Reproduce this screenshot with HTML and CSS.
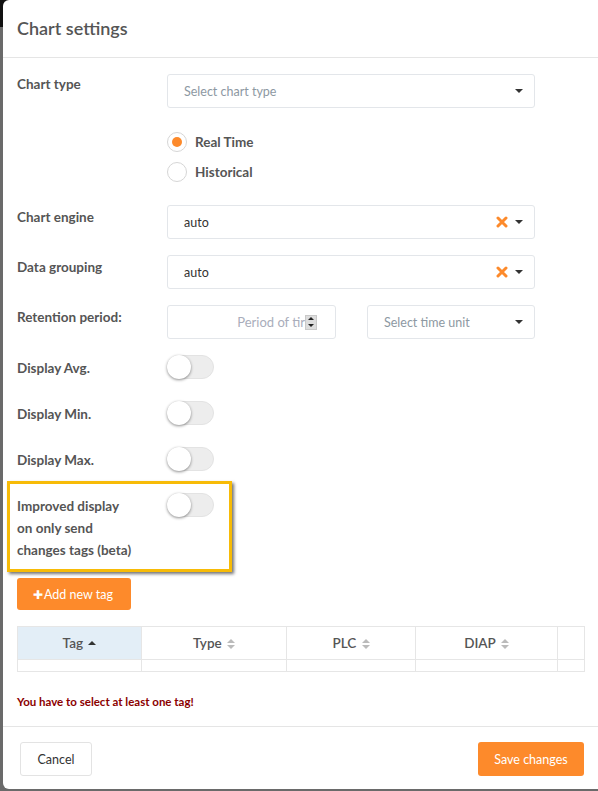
FILE: index.html
```html
<!DOCTYPE html>
<html>
<head>
<meta charset="utf-8">
<link rel="stylesheet" href="styles.css">
</head>
<body>
<div class="modal">
  <div class="modal-header">Chart settings</div>
  <div class="modal-body">
    <div class="row">
      <div class="label first">Chart type</div>
      <div class="field">
        <div class="select"><span class="placeholder">Select chart type</span><span class="caret"></span></div>
      </div>
    </div>
    <div class="radios">
      <div class="radio"><span class="circle checked"></span><span>Real Time</span></div>
      <div class="radio"><span class="circle"></span><span>Historical</span></div>
    </div>
    <div class="row">
      <div class="label">Chart engine</div>
      <div class="field">
        <div class="select"><span class="value">auto</span><svg class="clear" width="12" height="12" viewBox="0 0 12 12"><path d="M2 2 L10 10 M10 2 L2 10" stroke="#fd8a2b" stroke-width="3" stroke-linecap="round"/></svg><span class="caret"></span></div>
      </div>
    </div>
    <div class="row">
      <div class="label">Data grouping</div>
      <div class="field">
        <div class="select"><span class="value">auto</span><svg class="clear" width="12" height="12" viewBox="0 0 12 12"><path d="M2 2 L10 10 M10 2 L2 10" stroke="#fd8a2b" stroke-width="3" stroke-linecap="round"/></svg><span class="caret"></span></div>
      </div>
    </div>
    <div class="row">
      <div class="label">Retention period:</div>
      <div class="field split">
        <div class="numinput"><span class="numtext">Period of tir</span><span class="spinner"><span class="up"></span><span class="down"></span></span></div>
        <div class="select unit"><span class="placeholder">Select time unit</span><span class="caret"></span></div>
      </div>
    </div>
    <div class="trow">
      <div class="label">Display Avg.</div>
      <div class="toggle"><span class="knob"></span></div>
    </div>
    <div class="trow">
      <div class="label">Display Min.</div>
      <div class="toggle"><span class="knob"></span></div>
    </div>
    <div class="trow">
      <div class="label">Display Max.</div>
      <div class="toggle"><span class="knob"></span></div>
    </div>
    <div class="highlight">
      <div class="trow tall">
        <div class="label multi">Improved display<br>on only send<br>changes tags (beta)</div>
        <div class="toggle"><span class="knob"></span></div>
      </div>
    </div>
    <button class="btn-add"><span class="plus">&#10010;</span>Add new tag</button>
    <table class="tags">
      <thead>
        <tr>
          <th class="c1 sorted">Tag <span class="sort-up"></span></th>
          <th class="c2">Type <span class="sort"></span></th>
          <th class="c3">PLC <span class="sort"></span></th>
          <th class="c4">DIAP <span class="sort"></span></th>
          <th class="c5"></th>
        </tr>
      </thead>
      <tbody>
        <tr><td></td><td></td><td></td><td></td><td></td></tr>
      </tbody>
    </table>
    <div class="error">You have to select at least one tag!</div>
  </div>
  <div class="modal-footer">
    <button class="btn-cancel">Cancel</button>
    <button class="btn-save">Save changes</button>
  </div>
</div>
</body>
</html>
```

FILE: styles.css
```css
html, body {
  margin: 0;
  padding: 0;
  height: 100%;
}
body {
  background: linear-gradient(#111 0, #111 27px, #6a6a6a 27px);
  font-family: Lato, "Liberation Sans", sans-serif;
  color: #555;
  overflow: hidden;
}
.modal {
  margin-left: 3px;
  width: 620px;
  height: 789px;
  background: #fff;
  border-radius: 6px;
  box-sizing: border-box;
}
.modal-header {
  height: 58px;
  box-sizing: border-box;
  border-bottom: 1px solid #e5e5e5;
  padding: 17px 0 0 14px;
  font-size: 18px;
  font-weight: 600;
  color: #555;
}
.modal-body {
  padding: 16px 0 0 14px;
  width: 585px;
  box-sizing: border-box;
  height: 668px;
}
.row {
  display: flex;
  margin-bottom: 16px;
}
.label {
  width: 150px;
  font-size: 13.5px;
  font-weight: 700;
  color: #555;
  padding-top: 4px;
  flex-shrink: 0;
}
.label.first {
  padding-top: 2px;
}
.field {
  width: 368px;
}
.field.split {
  display: flex;
  gap: 31px;
}
.field.split .numinput {
  width: 169px;
}
.field.split .unit {
  width: 168px;
}
.select, .numinput {
  height: 34px;
  box-sizing: border-box;
  border: 1px solid #e3e6ea;
  border-radius: 3px;
  display: flex;
  align-items: center;
  padding: 0 11px 0 16px;
  font-size: 12.5px;
}
.placeholder {
  color: #8d98a2;
  flex: 1;
}
.value {
  color: #333;
  flex: 1;
}
.clear {
  margin-right: 7px;
}
.caret {
  width: 0;
  height: 0;
  border-left: 4px solid transparent;
  border-right: 4px solid transparent;
  border-top: 4px solid #333;
}
.numinput {
  padding: 0 18px 0 0;
  justify-content: flex-end;
}
.numtext {
  color: #a9adbb;
  font-size: 13px;
}
.spinner {
  width: 12px;
  height: 15px;
  background: #ddd;
  border: 1px solid #c9c9c9;
  box-sizing: border-box;
  display: flex;
  flex-direction: column;
  align-items: center;
  justify-content: space-around;
}
.up {
  width: 0; height: 0;
  border-left: 3px solid transparent;
  border-right: 3px solid transparent;
  border-bottom: 3px solid #222;
}
.down {
  width: 0; height: 0;
  border-left: 3px solid transparent;
  border-right: 3px solid transparent;
  border-top: 3px solid #222;
}
.radios {
  margin: 24px 0 23px 150px;
  display: flex;
  flex-direction: column;
  gap: 10px;
}
.radio {
  display: flex;
  align-items: center;
  gap: 8px;
  font-size: 13.5px;
  font-weight: 700;
  color: #555;
  height: 20px;
}
.circle {
  width: 20px;
  height: 20px;
  box-sizing: border-box;
  border: 1px solid #d6d6d6;
  border-radius: 50%;
  display: flex;
  align-items: center;
  justify-content: center;
}
.circle.checked::after {
  content: "";
  width: 10px;
  height: 10px;
  border-radius: 50%;
  background: #fd8a2b;
}
.trow {
  display: flex;
  height: 24px;
  margin-bottom: 22px;
}
.trow .label {
  padding-top: 5px;
}
.toggle {
  width: 47px;
  height: 24px;
  box-sizing: border-box;
  border: 1px solid #e3e3e3;
  background: #ededed;
  border-radius: 12px;
  position: relative;
}
.knob {
  position: absolute;
  left: -1px;
  top: -1px;
  width: 24px;
  height: 24px;
  border-radius: 50%;
  background: #fff;
  box-shadow: 0 1px 3px rgba(0,0,0,0.45);
}
.highlight {
  margin: -12px 0 0 -10px;
  width: 225px;
  height: 91px;
  box-sizing: border-box;
  border: 3px solid #f7bb07;
  box-shadow: 2px 2px 3px rgba(0,0,0,0.55);
  padding: 9px 0 0 7px;
}
.trow.tall {
  height: auto;
  margin: 0;
}
.trow .label.multi {
  line-height: 22px;
  padding-top: 2px;
}
.btn-add {
  margin-top: 6px;
  display: flex;
  align-items: center;
  height: 32px;
  width: 114px;
  border: none;
  border-radius: 3px;
  background: #fd8a2b;
  color: #fff;
  font-family: inherit;
  font-size: 12.5px;
  padding: 0 0 0 16px;
}
.plus {
  font-size: 12px;
  margin-right: 1px;
}
.tags {
  margin-top: 16px;
  border-collapse: collapse;
  width: 568px;
  font-size: 13.5px;
}
.tags th {
  height: 33px;
  box-sizing: border-box;
  border: 1px solid #e6e6e6;
  font-weight: 600;
  color: #555;
  padding: 0;
}
.tags td {
  height: 11px;
  border: 1px solid #e6e6e6;
  padding: 0;
}
.tags .c1 { width: 124px; background: #e3eef7; }
.tags .c2 { width: 145px; }
.tags .c3 { width: 129px; }
.tags .c4 { width: 142px; }
.tags .c5 { width: 27px; }
.sort-up {
  display: inline-block;
  vertical-align: middle;
  margin-left: 2px;
  width: 0; height: 0;
  border-left: 4px solid transparent;
  border-right: 4px solid transparent;
  border-bottom: 4px solid #333;
  margin-top: -3px;
}
.sort {
  display: inline-block;
  vertical-align: middle;
  margin-left: 2px;
  width: 8px;
  height: 10px;
  margin-top: -2px;
  position: relative;
}
.sort::before, .sort::after {
  content: "";
  position: absolute;
  left: 0;
  width: 0; height: 0;
  border-left: 4px solid transparent;
  border-right: 4px solid transparent;
}
.sort::before { top: 0; border-bottom: 4px solid #bbb; }
.sort::after { bottom: 0; border-top: 4px solid #bbb; }
.error {
  margin-top: 23px;
  color: #8b0000;
  font-size: 11.5px;
  font-weight: 700;
}
.modal-footer {
  border-top: 1px solid #e5e5e5;
  width: 598px;
  box-sizing: border-box;
  padding: 15px 17px 0 17px;
  display: flex;
  justify-content: space-between;
  align-items: flex-start;
}
.btn-cancel {
  width: 72px;
  height: 34px;
  background: #fff;
  border: 1px solid #e3e3e3;
  border-radius: 3px;
  font-family: inherit;
  font-size: 12.5px;
  color: #333;
}
.btn-save {
  width: 106px;
  height: 34px;
  background: #fd8a2b;
  border: none;
  border-radius: 3px;
  color: #fff;
  font-family: inherit;
  font-size: 12.5px;
}
```
